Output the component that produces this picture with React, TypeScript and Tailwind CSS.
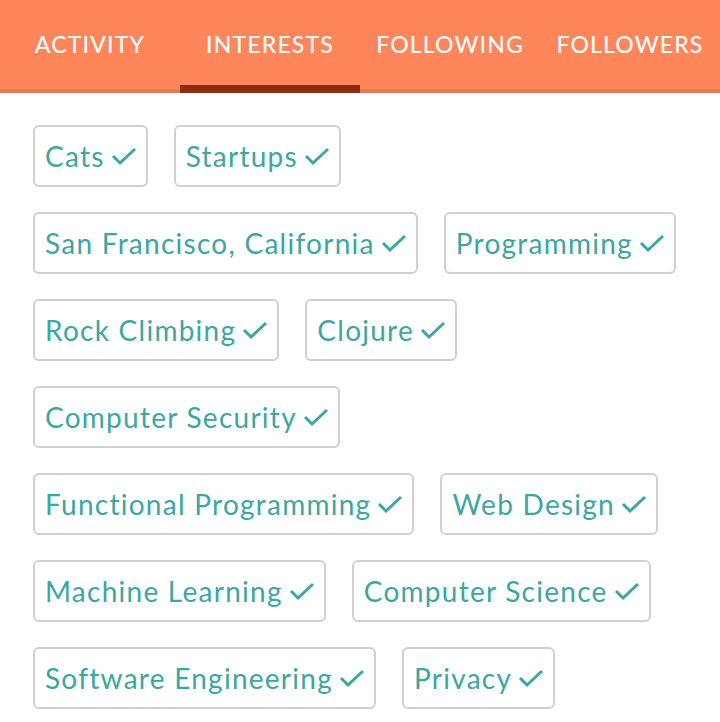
import { useState } from 'react'

const tabs = ['Activity', 'Interests', 'Following', 'Followers']

const interests = [
  'Cats',
  'Startups',
  'San Francisco, California',
  'Programming',
  'Rock Climbing',
  'Clojure',
  'Computer Security',
  'Functional Programming',
  'Web Design',
  'Machine Learning',
  'Computer Science',
  'Software Engineering',
  'Privacy',
]

function Check() {
  return (
    <svg width="26" height="20" viewBox="0 0 26 20" className="ml-[6px] shrink-0">
      <polyline points="2,10 9,17 24,3" fill="none" stroke="currentColor" strokeWidth="3" />
    </svg>
  )
}

export default function App() {
  const [active, setActive] = useState(1)

  return (
    <div className="min-h-screen bg-white font-['Lato','Noto_Sans',sans-serif]">
      {/* Tabs */}
      <nav className="flex h-[93px] bg-[#ff855b] border-b-4 border-[#e8785a]">
        {tabs.map((tab, i) => (
          <button
            key={tab}
            onClick={() => setActive(i)}
            className={`relative w-[180px] pt-[27px] self-stretch flex justify-center text-[23px] font-medium tracking-[0.05em] uppercase text-white ${
              active === i ? 'after:absolute after:left-0 after:right-0 after:bottom-[-4px] after:h-[8px] after:bg-[#8e2b14]' : ''
            }`}
          >
            {tab}
          </button>
        ))}
      </nav>

      {/* Interests */}
      <div className="flex flex-wrap gap-x-[26px] gap-y-[25px] pl-[33px] pr-4 pt-[32px]">
        {interests.map((item) => (
          <span
            key={item}
            className="flex items-center h-[62px] pl-[10px] pr-[9px] border-2 border-[#d0d0d0] rounded-[6px] text-[28px] tracking-[0.045em] text-[#3ba7a1]"
          >
            {item}
            <Check />
          </span>
        ))}
      </div>
    </div>
  )
}
